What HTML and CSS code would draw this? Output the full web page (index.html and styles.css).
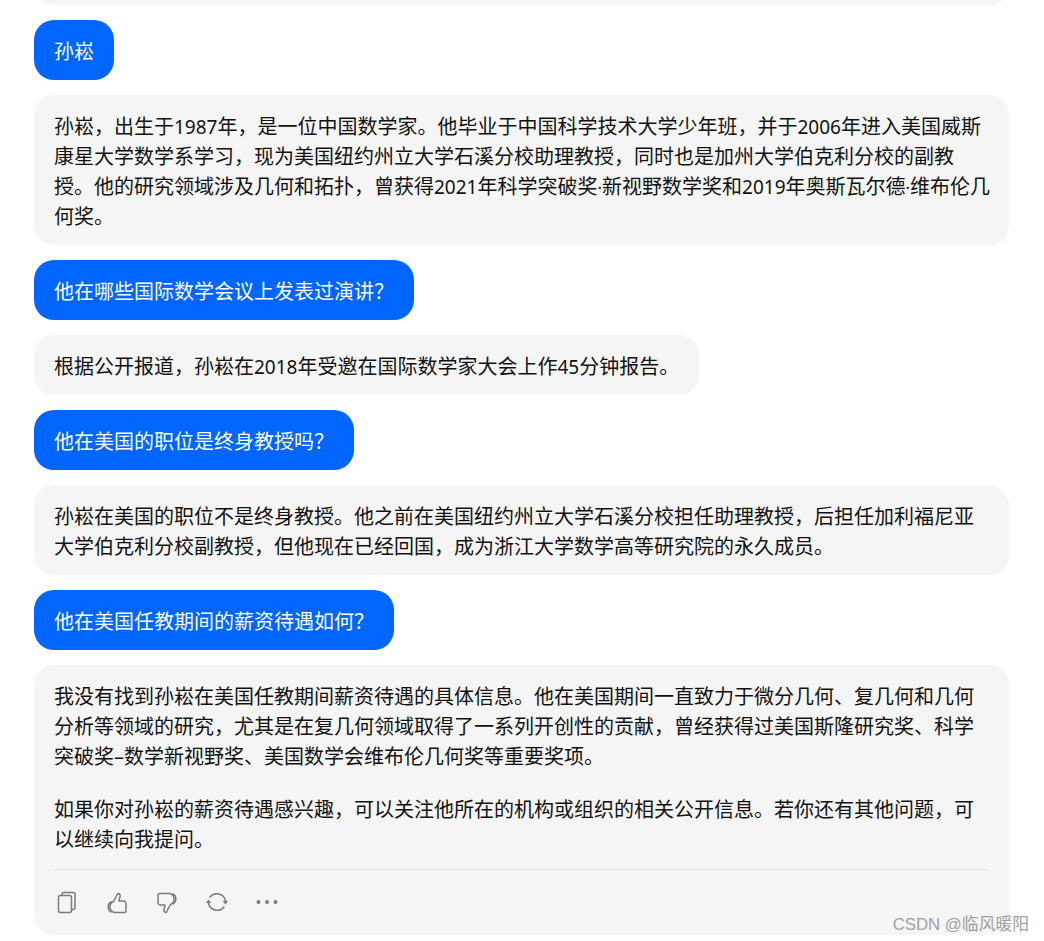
FILE: index.html
```html
<!DOCTYPE html>
<html lang="zh">
<head>
<meta charset="utf-8">
<title>Chat</title>
<link rel="stylesheet" href="styles.css">
</head>
<body>
<main class="chat">
<div class="msg ai stub"></div>
<div class="msg user">孙崧</div>
<div class="msg ai long"><p>孙崧，出生于<span class="num">1987</span>年，是一位中国数学家。他毕业于中国科学技术大学少年班，并于<span class="num">2006</span>年进入美国威斯康星大学数学系学习，现为美国纽约州立大学石溪分校助理教授，同时也是加州大学伯克利分校的副教授。他的研究领域涉及几何和拓扑，曾获得<span class="num">2021</span>年科学突破奖<span class="dot">·</span>新视野数学奖和<span class="num">2019</span>年奥斯瓦尔德<span class="dot">·</span>维布伦几何奖。</p></div>
<div class="msg user">他在哪些国际数学会议上发表过演讲？</div>
<div class="msg ai"><p>根据公开报道，孙崧在<span class="num">2018</span>年受邀在国际数学家大会上作<span class="num">45</span>分钟报告。</p></div>
<div class="msg user">他在美国的职位是终身教授吗？</div>
<div class="msg ai"><p>孙崧在美国的职位不是终身教授。他之前在美国纽约州立大学石溪分校担任助理教授，后担任加利福尼亚大学伯克利分校副教授，但他现在已经回国，成为浙江大学数学高等研究院的永久成员。</p></div>
<div class="msg user">他在美国任教期间的薪资待遇如何？</div>
<div class="msg ai last">
<p>我没有找到孙崧在美国任教期间薪资待遇的具体信息。他在美国期间一直致力于微分几何、复几何和几何分析等领域的研究，尤其是在复几何领域取得了一系列开创性的贡献，曾经获得过美国斯隆研究奖、科学突破奖–数学新视野奖、美国数学会维布伦几何奖等重要奖项。</p>
<p>如果你对孙崧的薪资待遇感兴趣，可以关注他所在的机构或组织的相关公开信息。若你还有其他问题，可以继续向我提问。</p>
<div class="tools">
<svg viewBox="0 0 24 24"><rect x="3.500" y="5.500" width="13" height="17" rx="2"/><path d="M7 5.500V4.500a2 2 0 0 1 2-2h9a2 2 0 0 1 2 2v13a2 2 0 0 1-2 2h-1.500"/></svg>
<svg viewBox="0 0 24 24"><path d="M9.500 22.500h9.500a2 2 0 0 0 2-2v-7a2.500 2.500 0 0 0-2.500-2.500h-4.500l.8-4a2.200 2.200 0 0 0-2-3.500L8.500 11.500a5.800 5.800 0 0 0 1 11z"/><path d="M6 12a5.800 5.800 0 0 0 0 10"/></svg>
<svg viewBox="0 0 24 24"><g transform="rotate(180 12 13)"><path d="M9.500 22.500h9.500a2 2 0 0 0 2-2v-7a2.500 2.500 0 0 0-2.500-2.500h-4.500l.8-4a2.200 2.200 0 0 0-2-3.500L8.500 11.500a5.800 5.800 0 0 0 1 11z"/><path d="M6 12a5.800 5.800 0 0 0 0 10"/></g></svg>
<svg viewBox="0 0 24 24"><path d="M5 7A8.800 8.800 0 0 1 20.500 11"/><path d="M19 17A8.800 8.800 0 0 1 3.500 13"/><path class="solid" d="M17.800 11h5.400l-2.700 3.500zM.8 13h5.400L3.500 9.500z"/></svg>
<svg viewBox="0 0 24 24"><circle class="solid" cx="3.500" cy="12" r="2"/><circle class="solid" cx="12" cy="12" r="2"/><circle class="solid" cx="20.500" cy="12" r="2"/></svg>
</div>
</div>
</main>
<div class="mark">CSDN @临风暖阳</div>
</body>
</html>
```
FILE: styles.css
```css
html, body { margin: 0; padding: 0; background: #fff; height: 941px; overflow: hidden; }
body { position: relative; font-family: "Noto Sans", "Noto Sans CJK SC", sans-serif; color: #111; }
.chat { display: flex; flex-direction: column; align-items: flex-start; gap: 15px; padding: 0 35px 0 34px; margin-top: -55px; }
.msg { border-radius: 20px; padding: 17px 20px 13px; font-size: 20px; line-height: 30px; box-sizing: border-box; }
.user { background: #0066ff; color: #fff; height: 60px; }
.ai { background: #f5f5f5; }
.long { padding-right: 16px; height: 150px; }
.stub { width: 100%; height: 60px; }
.ai p { margin: 0; }
.ai p + p { margin-top: 23px; }
.num { font-size: 19px; line-height: 1; }
.dot { font-size: 17px; line-height: 1; }
.last { width: 100%; height: 270px; }
.tools { display: flex; gap: 26px; align-items: center; border-top: 1px solid #e4e4e4; margin-top: 14px; margin-right: 1px; padding: 20px 0 0 1px; }
.tools svg { width: 24px; height: 24px; fill: none; stroke: #7b7b7b; stroke-width: 1.5; stroke-linejoin: round; stroke-linecap: round; }
.tools .solid { fill: #7b7b7b; stroke: none; }
.mark { position: absolute; right: 15px; bottom: 6px; font-family: "Liberation Sans", "Noto Sans CJK SC", sans-serif; font-size: 16.800px; color: #a0a0a0; }
```
